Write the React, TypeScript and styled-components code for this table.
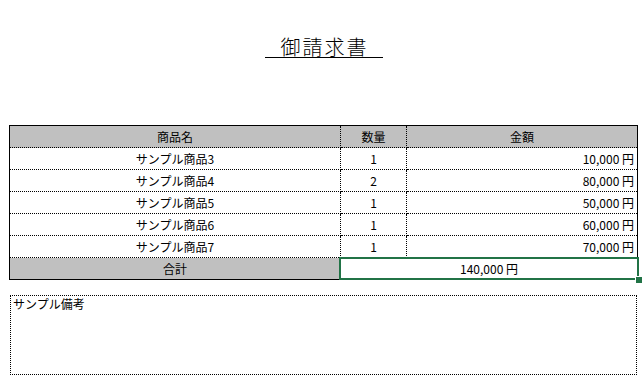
import React from 'react'
import styled, { createGlobalStyle } from 'styled-components'

interface Item {
  name: string;
  qty: number;
  amount: number;
}

const items: Item[] = [
  { name: 'サンプル商品3', qty: 1, amount: 10000 },
  { name: 'サンプル商品4', qty: 2, amount: 80000 },
  { name: 'サンプル商品5', qty: 1, amount: 50000 },
  { name: 'サンプル商品6', qty: 1, amount: 60000 },
  { name: 'サンプル商品7', qty: 1, amount: 70000 },
]

const yen = (n: number) => `${n.toLocaleString('ja-JP')} 円`

const GlobalStyle = createGlobalStyle`
  body {
    margin: 0;
    background: #fff;
    color: #000;
    font-family: "Noto Sans CJK JP", "Liberation Sans", sans-serif;
    font-size: 12px;
  }
`

const Sheet = styled.main`
  width: 643px;
  height: 383px;
  padding: 37px 0 0 9px;
  box-sizing: border-box;
  display: flex;
  flex-direction: column;
`

const TitleRow = styled.div`
  width: 628px;
  display: flex;
  justify-content: center;
  height: 88px;
`

const Title = styled.h1`
  margin: 0 0 0 1px;
  height: 20px;
  font-size: 20px;
  font-weight: 300;
  line-height: 20px;
  letter-spacing: 2px;
  padding: 0 14px 0 16px;
  border-bottom: 1px solid #000;
`

const Table = styled.table`
  width: 628px;
  border-collapse: collapse;
  table-layout: fixed;
  border: 1px solid #000;
`

const Row = styled.tr`
  height: 22px;
`

const Cell = styled.td<{ $align?: 'left' | 'center' | 'right'; $head?: boolean }>`
  padding: 0 3px;
  height: 21px;
  line-height: 21px;
  text-align: ${(p) => p.$align || 'center'};
  background: ${(p) => (p.$head ? '#c0c0c0' : '#fff')};
  border: 1px dotted #000;
  white-space: nowrap;
  &:first-child { border-left: 1px solid #000; }
  &:last-child { border-right: 1px solid #000; }
`

const HeadRow = styled(Row)`
  td { border-top: 1px solid #000; }
`

const TotalRow = styled(Row)`
  td { border-bottom: 1px solid #000; }
`

const Selected = styled(Cell)`
  position: relative;
  &::before {
    content: "";
    position: absolute;
    left: -2px;
    top: -1px;
    right: -2px;
    bottom: -1px;
    border: 2px solid #217346;
    pointer-events: none;
  }
  &::after {
    content: "";
    position: absolute;
    right: -5px;
    bottom: -4px;
    width: 6px;
    height: 6px;
    background: #217346;
    border: 1px solid #fff;
    border-width: 1px 0 0 1px;
  }
`

const Notes = styled.div`
  margin: 15px 0 0 1px;
  width: 627px;
  height: 80px;
  box-sizing: border-box;
  border: 1px dotted #000;
  padding: 1px 2px;
  line-height: 14px;
`

export default function App() {
  return (
    <>
      <GlobalStyle />
      <Sheet>
        <TitleRow>
          <Title>御請求書</Title>
        </TitleRow>
        <Table>
          <colgroup>
            <col style={{ width: 331 }} />
            <col style={{ width: 66 }} />
            <col style={{ width: 231 }} />
          </colgroup>
          <tbody>
            <HeadRow>
              <Cell $head>商品名</Cell>
              <Cell $head>数量</Cell>
              <Cell $head>金額</Cell>
            </HeadRow>
            {items.map((it) => (
              <Row key={it.name}>
                <Cell>{it.name}</Cell>
                <Cell>{it.qty}</Cell>
                <Cell $align="right">{yen(it.amount)}</Cell>
              </Row>
            ))}
            <TotalRow>
              <Cell $head>合計</Cell>
              <Selected colSpan={2}>{yen(140000)}</Selected>
            </TotalRow>
          </tbody>
        </Table>
        <Notes>サンプル備考</Notes>
      </Sheet>
    </>
  )
}
